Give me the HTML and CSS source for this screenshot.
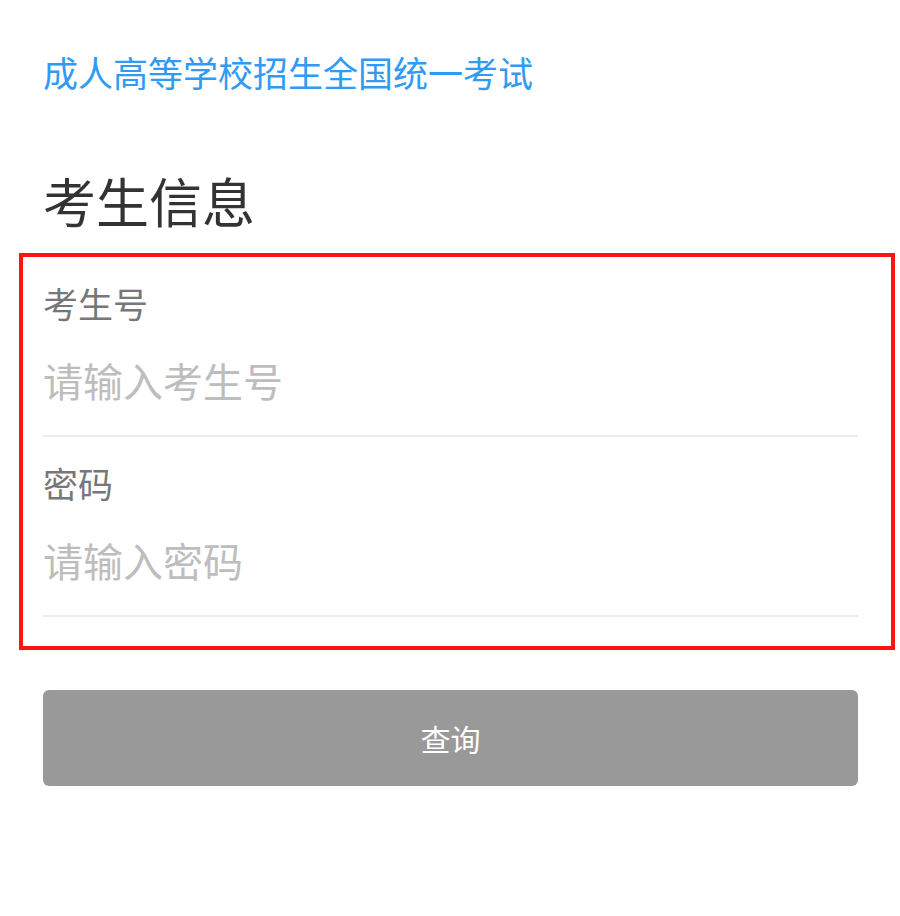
FILE: index.html
```html
<!DOCTYPE html>
<html lang="zh-CN">
<head>
<meta charset="utf-8">
<title>考生信息</title>
<link rel="stylesheet" href="styles.css">
</head>
<body>
<div class="page">
  <div class="site-title">成人高等学校招生全国统一考试</div>
  <h1 class="heading">考生信息</h1>
  <form class="form-box">
    <div class="field">
      <label class="label" for="ksh">考生号</label>
      <input class="input" id="ksh" type="text" placeholder="请输入考生号">
    </div>
    <div class="field">
      <label class="label" for="pwd">密码</label>
      <input class="input" id="pwd" type="password" placeholder="请输入密码">
    </div>
  </form>
  <button class="submit" type="button">查询</button>
</div>
</body>
</html>
```

FILE: styles.css
```css
* { box-sizing: border-box; }
html, body { margin: 0; padding: 0; background: #fff; }
body {
  font-family: "Noto Sans CJK SC", "Noto Sans", sans-serif;
}
.page {
  padding: 48px 42px 0 43px;
}
.site-title {
  font-size: 35px;
  line-height: 48px;
  color: #2f9bf5;
}
.heading {
  margin: 68px 0 0;
  font-size: 53px;
  line-height: 72px;
  font-weight: normal;
  color: #333;
}
.form-box {
  margin: 17px -37px 0 -24px;
  border: 4px solid #ff1414;
  padding: 0 33px 29px 20px;
}
.field {
  padding: 22px 0 27px;
  border-bottom: 2px solid #ececec;
}
.label {
  display: block;
  font-size: 35px;
  line-height: 48px;
  color: #777;
}
.input {
  display: block;
  width: 100%;
  margin-top: 25px;
  height: 56px;
  border: none;
  outline: none;
  padding: 0;
  font-family: inherit;
  font-size: 40px;
  line-height: 56px;
  color: #333;
  background: transparent;
}
.input::placeholder { color: #bdbdbd; }
.submit {
  display: block;
  width: 100%;
  margin-top: 40px;
  height: 96px;
  border: none;
  border-radius: 6px;
  background: #999;
  color: #fff;
  font-family: inherit;
  font-size: 30px;
  line-height: 96px;
  padding: 0;
}
```
